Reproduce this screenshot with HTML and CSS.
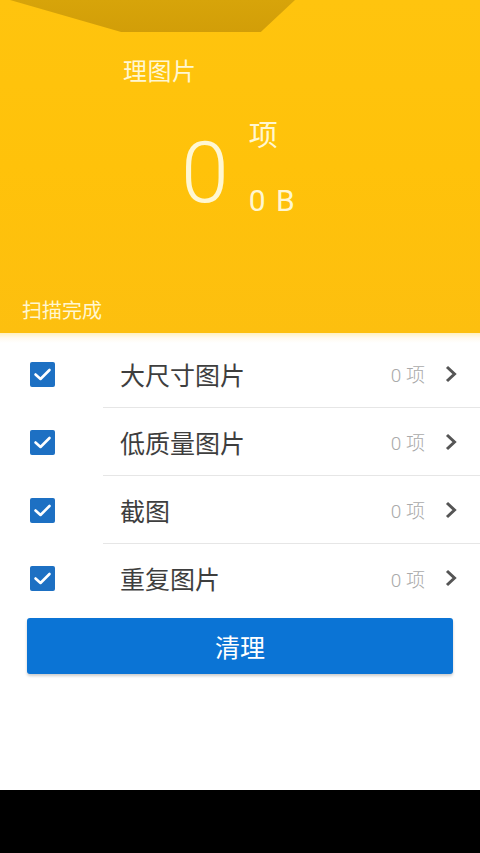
FILE: index.html
```html
<!DOCTYPE html>
<html lang="zh">
<head>
<meta charset="utf-8">
<link rel="stylesheet" href="styles.css">
</head>
<body>
<div class="page">
  <header class="header">
    <div class="shade"></div>
    <div class="title">理图片</div>
    <div class="stats">
      <div class="big">0</div>
      <div class="side">
        <div class="unit">项</div>
        <div class="size">0 B</div>
      </div>
    </div>
    <div class="status">扫描完成</div>
  </header>
  <div class="fade"></div>
  <ul class="list">
    <li class="row">
      <span class="check"><svg width="25" height="25" viewBox="0 0 25 25"><rect width="25" height="25" rx="2" fill="#1d70c3"/><polyline points="5.5,12.5 10.5,17 19.5,8" fill="none" stroke="#fff" stroke-width="2.6" stroke-linecap="round" stroke-linejoin="round"/></svg></span>
      <div class="body">
        <span class="label">大尺寸图片</span>
        <span class="count">0 项</span>
        <svg class="chev" width="14" height="20" viewBox="0 0 14 20"><polyline points="3,3 10.5,10 3,17" fill="none" stroke="#555" stroke-width="3" stroke-linejoin="miter"/></svg>
      </div>
    </li>
    <li class="row">
      <span class="check"><svg width="25" height="25" viewBox="0 0 25 25"><rect width="25" height="25" rx="2" fill="#1d70c3"/><polyline points="5.5,12.5 10.5,17 19.5,8" fill="none" stroke="#fff" stroke-width="2.6" stroke-linecap="round" stroke-linejoin="round"/></svg></span>
      <div class="body">
        <span class="label">低质量图片</span>
        <span class="count">0 项</span>
        <svg class="chev" width="14" height="20" viewBox="0 0 14 20"><polyline points="3,3 10.5,10 3,17" fill="none" stroke="#555" stroke-width="3" stroke-linejoin="miter"/></svg>
      </div>
    </li>
    <li class="row">
      <span class="check"><svg width="25" height="25" viewBox="0 0 25 25"><rect width="25" height="25" rx="2" fill="#1d70c3"/><polyline points="5.5,12.5 10.5,17 19.5,8" fill="none" stroke="#fff" stroke-width="2.6" stroke-linecap="round" stroke-linejoin="round"/></svg></span>
      <div class="body">
        <span class="label">截图</span>
        <span class="count">0 项</span>
        <svg class="chev" width="14" height="20" viewBox="0 0 14 20"><polyline points="3,3 10.5,10 3,17" fill="none" stroke="#555" stroke-width="3" stroke-linejoin="miter"/></svg>
      </div>
    </li>
    <li class="row last">
      <span class="check"><svg width="25" height="25" viewBox="0 0 25 25"><rect width="25" height="25" rx="2" fill="#1d70c3"/><polyline points="5.5,12.5 10.5,17 19.5,8" fill="none" stroke="#fff" stroke-width="2.6" stroke-linecap="round" stroke-linejoin="round"/></svg></span>
      <div class="body">
        <span class="label">重复图片</span>
        <span class="count">0 项</span>
        <svg class="chev" width="14" height="20" viewBox="0 0 14 20"><polyline points="3,3 10.5,10 3,17" fill="none" stroke="#555" stroke-width="3" stroke-linejoin="miter"/></svg>
      </div>
    </li>
  </ul>
  <div class="actions">
    <button class="clean">清理</button>
  </div>
  <footer class="navbar"></footer>
</div>
</body>
</html>
```

FILE: styles.css
```css
* { box-sizing: border-box; }
html, body { margin: 0; padding: 0; }
body {
  width: 480px;
  height: 853px;
  overflow: hidden;
  background: #fff;
  font-family: "Noto Sans CJK SC", Roboto, sans-serif;
}
.page {
  display: flex;
  flex-direction: column;
  height: 853px;
}
.header {
  position: relative;
  height: 333px;
  background: linear-gradient(180deg, #ffc40e 0%, #ffc20a 50%, #fdbf0f 100%);
  display: flex;
  flex-direction: column;
  color: #fff7d2;
  overflow: hidden;
}
.shade {
  position: absolute;
  left: 10px;
  top: 0;
  width: 285px;
  height: 32px;
  background: linear-gradient(180deg, #d7a40a 0%, #d29e08 100%);
  clip-path: polygon(0 0, 100% 0, 88% 100%, 39% 100%);
}
.title {
  margin-top: 54px;
  padding-left: 123px;
  font-size: 24px;
  line-height: 32px;
  letter-spacing: 0.5px;
}
.stats {
  display: flex;
  align-items: flex-start;
  margin-top: 37px;
  padding-left: 181px;
  gap: 20px;
}
.big {
  font-family: Roboto, sans-serif;
  font-weight: 300;
  font-size: 86px;
  line-height: 100px;
}
.side {
  display: flex;
  flex-direction: column;
  margin-top: -7px;
}
.unit {
  font-size: 29px;
  line-height: 34px;
}
.size {
  margin-top: 34px;
  font-family: Roboto, sans-serif;
  font-size: 30px;
  line-height: 34px;
  letter-spacing: 1.5px;
}
.status {
  margin-top: auto;
  margin-bottom: 9px;
  padding-left: 22px;
  font-size: 20px;
  line-height: 28px;
}
.fade {
  height: 10px;
  background: linear-gradient(180deg, #fff0c0 0%, #fffaf0 50%, #ffffff 100%);
}
.list {
  list-style: none;
  margin: -3px 0 0;
  padding: 0;
}
.row {
  display: flex;
  align-items: stretch;
  height: 68px;
}
.check {
  width: 103px;
  display: flex;
  align-items: center;
  padding-left: 30px;
}
.check svg { display: block; }
.body {
  flex: 1;
  display: flex;
  align-items: center;
  border-bottom: 1px solid #e6e6e6;
  padding-left: 17px;
  padding-right: 22px;
}
.row.last .body { border-bottom: none; }
.label {
  flex: 1;
  font-size: 25px;
  color: #3e3e3e;
  line-height: 34px;
}
.count {
  font-size: 19px;
  color: #aaa;
  margin-right: 19px;
  font-family: Roboto, "Noto Sans CJK SC", sans-serif;
  font-weight: 300;
}
.chev { display: block; }
.actions {
  padding: 6px 27px 0;
}
.clean {
  display: block;
  width: 100%;
  height: 56px;
  border: none;
  border-radius: 3px;
  background: #0b74d5;
  color: #fff;
  font-family: "Noto Sans CJK SC", sans-serif;
  font-size: 25px;
  box-shadow: 0 2px 3px rgba(0, 0, 0, 0.2);
}
.navbar {
  margin-top: auto;
  height: 63px;
  background: #000;
}
```
